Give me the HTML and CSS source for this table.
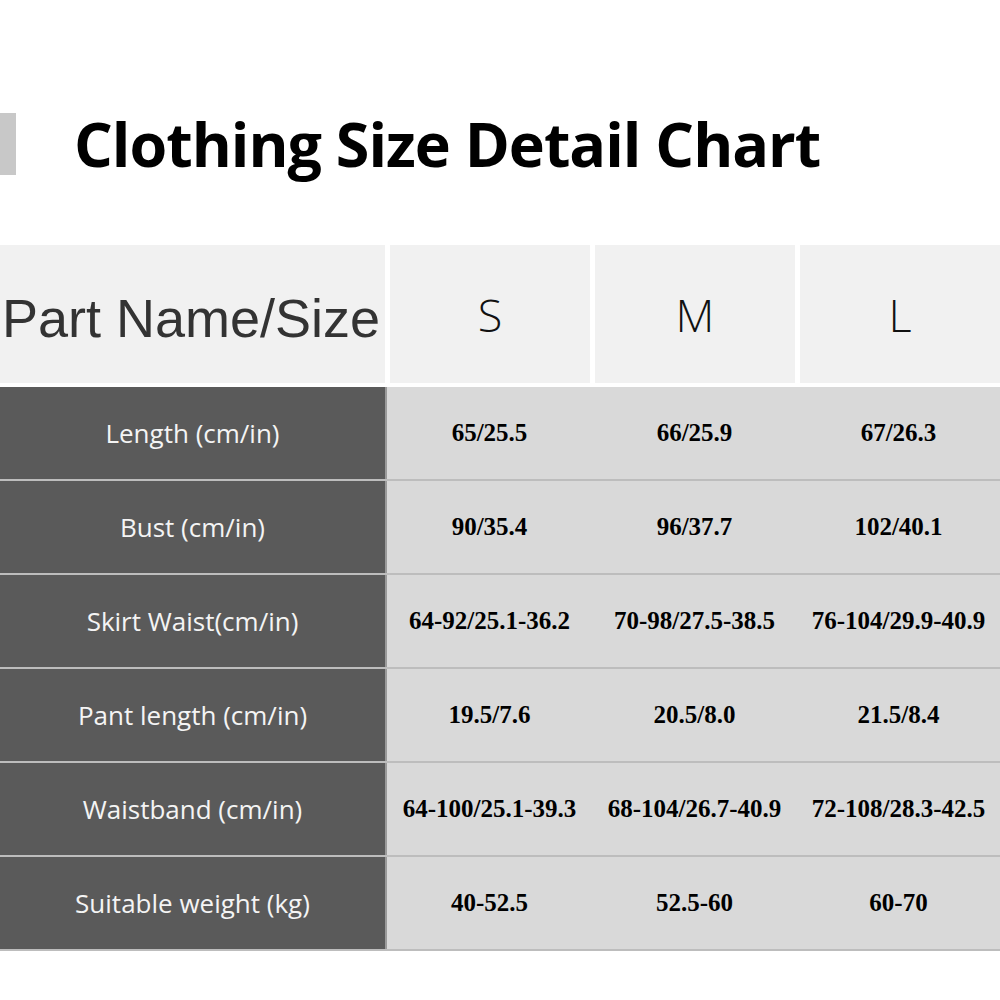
FILE: index.html
```html
<!DOCTYPE html>
<html>
<head>
<meta charset="utf-8">
<link rel="stylesheet" href="styles.css">
</head>
<body>
<div class="page">
  <div class="title-row">
    <div class="title-bar"></div>
    <h1 class="title">Clothing Size Detail Chart</h1>
  </div>

  <div class="chart">
    <div class="head-row">
      <div class="head-cell part">Part Name/Size</div>
      <div class="head-cell size">S</div>
      <div class="head-cell size">M</div>
      <div class="head-cell size">L</div>
    </div>

    <div class="row">
      <div class="label">Length (cm/in)</div>
      <div class="val">65/25.5</div>
      <div class="val">66/25.9</div>
      <div class="val">67/26.3</div>
    </div>
    <div class="row">
      <div class="label">Bust (cm/in)</div>
      <div class="val">90/35.4</div>
      <div class="val">96/37.7</div>
      <div class="val">102/40.1</div>
    </div>
    <div class="row">
      <div class="label">Skirt Waist(cm/in)</div>
      <div class="val">64-92/25.1-36.2</div>
      <div class="val">70-98/27.5-38.5</div>
      <div class="val">76-104/29.9-40.9</div>
    </div>
    <div class="row">
      <div class="label">Pant length (cm/in)</div>
      <div class="val">19.5/7.6</div>
      <div class="val">20.5/8.0</div>
      <div class="val">21.5/8.4</div>
    </div>
    <div class="row">
      <div class="label">Waistband (cm/in)</div>
      <div class="val">64-100/25.1-39.3</div>
      <div class="val">68-104/26.7-40.9</div>
      <div class="val">72-108/28.3-42.5</div>
    </div>
    <div class="row last">
      <div class="label">Suitable weight (kg)</div>
      <div class="val">40-52.5</div>
      <div class="val">52.5-60</div>
      <div class="val">60-70</div>
    </div>
  </div>
</div>
</body>
</html>
```

FILE: styles.css
```css
html, body {
  margin: 0;
  padding: 0;
  background: #ffffff;
}

.page {
  width: 1000px;
}

.title-row {
  display: flex;
  align-items: center;
  height: 62px;
  margin-top: 113px;
}

.title-bar {
  width: 16px;
  height: 62px;
  background: #c8c8c8;
}

.title {
  margin: 0 0 0 58px;
  font-family: "Open Sans", "Noto Sans", sans-serif;
  font-weight: 700;
  font-size: 61px;
  line-height: 62px;
  color: #000;
  letter-spacing: -1px;
  white-space: nowrap;
}

.chart {
  margin-top: 70px;
}

.head-row {
  display: grid;
  grid-template-columns: 385px 200px 200px 200px;
  column-gap: 5px;
  height: 138px;
}

.head-cell {
  background: #f1f1f1;
  display: flex;
  align-items: center;
  justify-content: center;
}

.head-cell.part {
  justify-content: flex-start;
  padding-left: 2px;
  font-family: "Liberation Sans", Arial, sans-serif;
  font-size: 54px;
  color: #333333;
  padding-top: 8px;
  box-sizing: border-box;
  white-space: nowrap;
}

.head-cell.size {
  font-family: "Open Sans", "Noto Sans", sans-serif;
  font-weight: 300;
  font-size: 45px;
  color: #111111;
}

.row {
  display: grid;
  grid-template-columns: 387px 205px 205px 203px;
  height: 94px;
  box-sizing: border-box;
  border-bottom: 2px solid #bdbdbd;
  background: #d9d9d9;
}

.head-row + .row {
  margin-top: 4px;
}

.label {
  background: #5a5a5a;
  border-right: 2px solid #9a9a9a;
  display: flex;
  align-items: center;
  justify-content: center;
  font-family: "Open Sans", "Noto Sans", sans-serif;
  font-size: 26px;
  color: #f4f4f4;
}

.val {
  display: flex;
  align-items: center;
  justify-content: center;
  font-family: "Liberation Serif", "Times New Roman", serif;
  font-weight: 700;
  font-size: 25px;
  color: #000;
}
```
